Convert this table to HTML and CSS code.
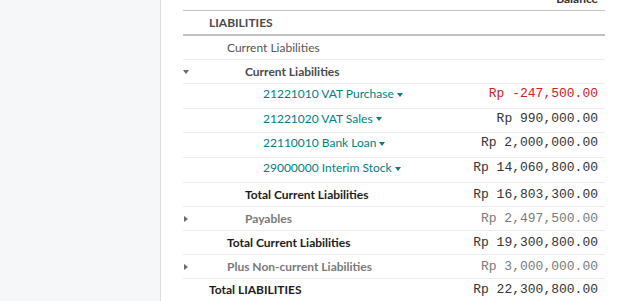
FILE: index.html
```html
<!DOCTYPE html>
<html lang="en">
<head>
  <meta charset="UTF-8">
  <title>Balance Sheet</title>
  <link rel="stylesheet" href="styles.css">
</head>
<body>
  <aside class="sidebar"></aside>

  <main class="report">
    <div class="sheet">
      <div class="row head-row">
        <span class="caret-cell"></span>
        <span class="label"></span>
        <span class="amount">Balance</span>
      </div>

      <div class="row section-row">
        <span class="caret-cell"></span>
        <span class="label lvl0 strong">LIABILITIES</span>
        <span class="amount"></span>
      </div>

      <div class="row">
        <span class="caret-cell"></span>
        <span class="label lvl1 muted">Current Liabilities</span>
        <span class="amount"></span>
      </div>

      <div class="row">
        <span class="caret-cell"><i class="caret-down"></i></span>
        <span class="label lvl2 strong">Current Liabilities</span>
        <span class="amount"></span>
      </div>

      <div class="row account-row">
        <span class="caret-cell"></span>
        <span class="label lvl3"><a class="account" href="#">21221010 VAT Purchase<i class="acc-caret"></i></a></span>
        <span class="amount negative">Rp -247,500.00</span>
      </div>
      <div class="row account-row short">
        <span class="caret-cell"></span>
        <span class="label lvl3"><a class="account" href="#">21221020 VAT Sales<i class="acc-caret"></i></a></span>
        <span class="amount">Rp 990,000.00</span>
      </div>
      <div class="row account-row">
        <span class="caret-cell"></span>
        <span class="label lvl3"><a class="account" href="#">22110010 Bank Loan<i class="acc-caret"></i></a></span>
        <span class="amount">Rp 2,000,000.00</span>
      </div>
      <div class="row account-row">
        <span class="caret-cell"></span>
        <span class="label lvl3"><a class="account" href="#">29000000 Interim Stock<i class="acc-caret"></i></a></span>
        <span class="amount">Rp 14,060,800.00</span>
      </div>

      <div class="row">
        <span class="caret-cell"></span>
        <span class="label lvl2 total">Total Current Liabilities</span>
        <span class="amount">Rp 16,803,300.00</span>
      </div>

      <div class="row folded">
        <span class="caret-cell"><i class="caret-right"></i></span>
        <span class="label lvl2 strong">Payables</span>
        <span class="amount">Rp 2,497,500.00</span>
      </div>

      <div class="row">
        <span class="caret-cell"></span>
        <span class="label lvl1 total">Total Current Liabilities</span>
        <span class="amount">Rp 19,300,800.00</span>
      </div>

      <div class="row folded">
        <span class="caret-cell"><i class="caret-right"></i></span>
        <span class="label lvl1 strong">Plus Non-current Liabilities</span>
        <span class="amount">Rp 3,000,000.00</span>
      </div>

      <div class="row last-row">
        <span class="caret-cell"></span>
        <span class="label lvl0 total">Total LIABILITIES</span>
        <span class="amount">Rp 22,300,800.00</span>
      </div>
    </div>
  </main>
</body>
</html>
```

FILE: styles.css
```css
body {
  margin: 0;
  display: flex;
  height: 301px;
  overflow: hidden;
  font-family: Lato, "Open Sans", sans-serif;
  font-size: 12px;
  color: #212529;
  background: #fff;
}

.sidebar {
  width: 160px;
  flex: none;
  background: #f6f7f9;
  border-right: 1px solid #d9dbde;
}

.report {
  flex: 1;
  padding: 0 17px 0 22px;
}

/* the report is scrolled a little, so the header sits above the top */
.sheet {
  margin-top: -13px;
}

.row {
  display: flex;
  align-items: center;
  height: 24px;
  box-sizing: border-box;
  border-bottom: 1px solid #ebebeb;
}
.account-row {
  height: 25px;
  padding-bottom: 5px;
}
.account-row.short {
  height: 24px;
}
.head-row {
  border-bottom: 1px solid #c4c4c4;
  font-weight: 700;
}
.section-row {
  height: 25px;
  border-bottom: 2px solid #c2c2c2;
}
.last-row {
  border-bottom: none;
  align-items: flex-start;
  padding-top: 3px;
}

.caret-cell {
  width: 26px;
  flex: none;
  display: flex;
  align-items: center;
}
.caret-down {
  width: 0;
  height: 0;
  border-left: 3.5px solid transparent;
  border-right: 3.5px solid transparent;
  border-top: 4px solid #6b6b6b;
}
.caret-right {
  width: 0;
  height: 0;
  margin-left: 1px;
  border-top: 3.5px solid transparent;
  border-bottom: 3.5px solid transparent;
  border-left: 4px solid #6b6b6b;
}

.label {
  flex: 1;
  white-space: nowrap;
}
.lvl0 { padding-left: 0; }
.lvl1 { padding-left: 18px; }
.lvl2 { padding-left: 36px; }
.lvl3 { padding-left: 54px; }

.strong {
  font-weight: 700;
  color: #4a4a4a;
}
.muted {
  color: #555;
}
.total {
  font-weight: 700;
  color: #1b1b1b;
}

.account {
  color: #017e84;
  text-decoration: none;
}
.acc-caret {
  display: inline-block;
  vertical-align: middle;
  width: 0;
  height: 0;
  margin-left: 3px;
  border-left: 3.5px solid transparent;
  border-right: 3.5px solid transparent;
  border-top: 4px solid #017e84;
}

.amount {
  padding-right: 7px;
  font-family: "Liberation Mono", "Courier New", monospace;
  font-size: 13px;
  color: #333;
  white-space: nowrap;
}
.head-row .amount {
  font-family: Lato, "Open Sans", sans-serif;
  font-size: 12px;
}
.negative {
  color: #d0201c;
}
.folded .label,
.folded .amount {
  color: #7a7a7a;
}
```
